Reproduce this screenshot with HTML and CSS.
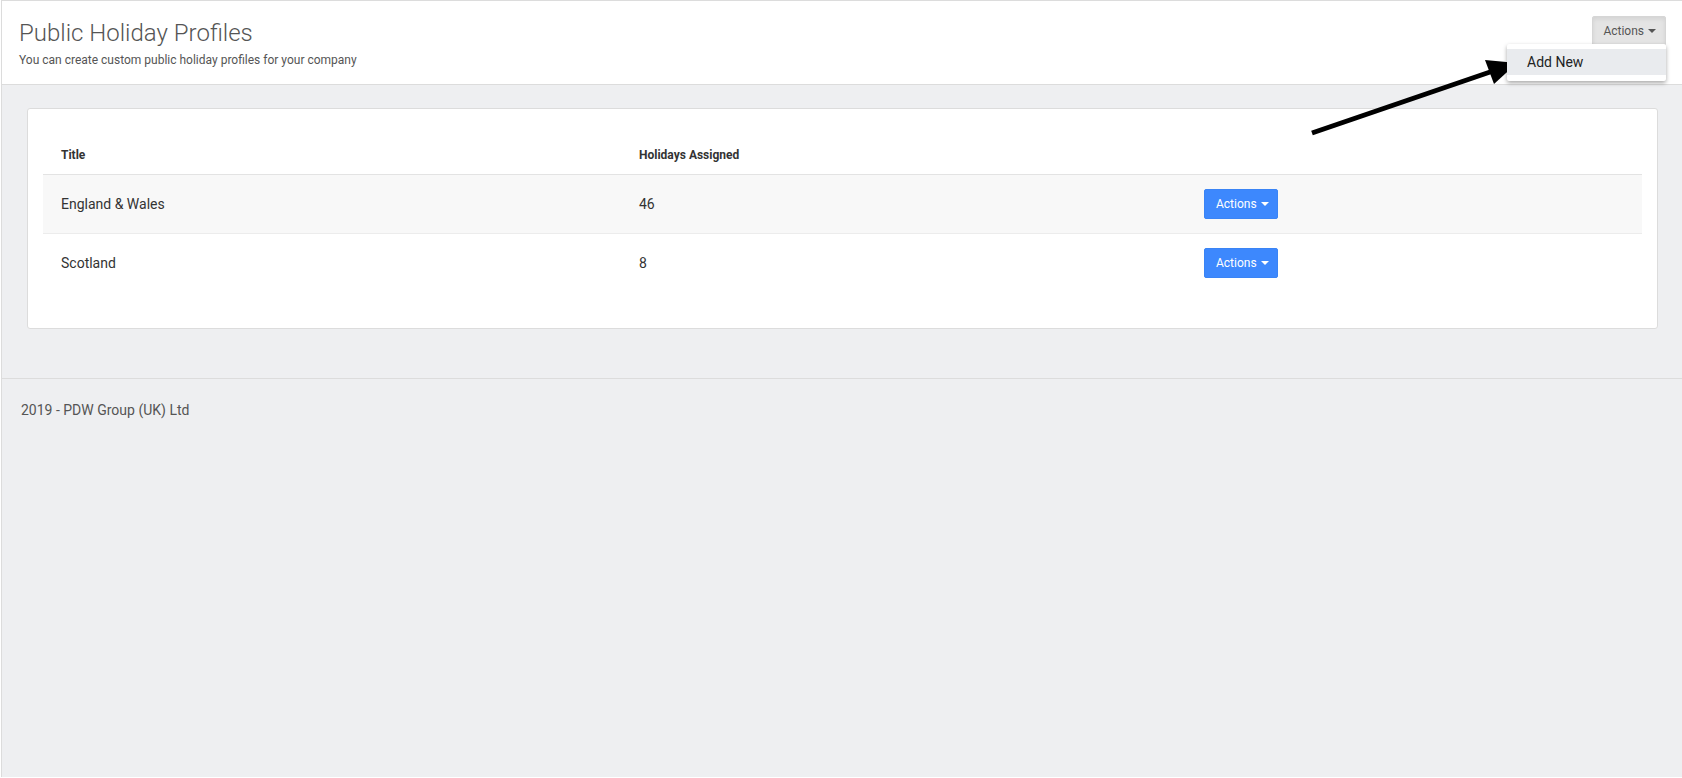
FILE: index.html
```html
<!DOCTYPE html>
<html lang="en">
<head>
  <meta charset="UTF-8">
  <meta name="viewport" content="width=device-width, initial-scale=1.0">
  <title>Public Holiday Profiles</title>
  <link rel="stylesheet" href="styles.css">
</head>
<body>

  <div class="page">
    <div class="page-header">
      <div class="page-heading">
        <h1>Public Holiday Profiles</h1>
        <p class="page-subtitle">You can create custom public holiday profiles for your company</p>
      </div>
      <div class="header-actions">
        <button class="btn btn-default">Actions <span class="caret"></span></button>
        <ul class="dropdown-menu">
          <li class="dropdown-item active">Add New</li>
        </ul>
      </div>
    </div>

    <div class="content">
      <div class="card">
        <table class="profiles-table">
          <thead>
            <tr>
              <th class="col-title">Title</th>
              <th class="col-count">Holidays Assigned</th>
              <th></th>
            </tr>
          </thead>
          <tbody>
            <tr class="striped">
              <td>England &amp; Wales</td>
              <td>46</td>
              <td><button class="btn btn-primary">Actions <span class="caret"></span></button></td>
            </tr>
            <tr>
              <td>Scotland</td>
              <td>8</td>
              <td><button class="btn btn-primary">Actions <span class="caret"></span></button></td>
            </tr>
          </tbody>
        </table>
      </div>
    </div>

    <div class="footer">2019 - PDW Group (UK) Ltd</div>
  </div>

  <!-- annotation arrow pointing at the menu item -->
  <svg class="pointer-arrow" width="1682" height="778" viewBox="0 0 1682 778">
    <line x1="1312" y1="133" x2="1493" y2="71" stroke="#000" stroke-width="5"/>
    <polygon points="1517,63 1485,60 1494,84" fill="#000"/>
  </svg>

</body>
</html>
```

FILE: styles.css
```css
body {
  margin: 0;
  background-color: #ffffff;
  font-family: Roboto, "Helvetica Neue", Arial, sans-serif;
  color: #333;
}
.page {
  margin-left: 1px;
  min-height: 776px;
  border-top: 1px solid #dcdcdc;
  border-left: 1px solid #dcdcdc;
  background-color: #eeeff1;
}
.page-header {
  display: flex;
  justify-content: space-between;
  align-items: flex-start;
  background-color: #fff;
  border-bottom: 1px solid #dcdcdc;
  padding: 15px 16px 15px 17px;
}
.page-header h1 {
  margin: 2px 0 3px 0;
  font-size: 24px;
  line-height: 30px;
  font-weight: 300;
  color: #555;
}
.page-subtitle {
  margin: 0;
  font-size: 12px;
  line-height: 18px;
  color: #555;
}
.header-actions {
  position: relative;
}
.btn {
  font-family: Roboto, Arial, sans-serif;
  border-radius: 2px;
  cursor: pointer;
  display: inline-flex;
  align-items: center;
  gap: 4px;
}
.btn-default {
  height: 30px;
  padding: 0 9px 0 10px;
  font-size: 12px;
  color: #555;
  background-color: #e4e4e4;
  border: 1px solid #d6d6d6;
  box-shadow: inset 0 2px 4px rgba(0, 0, 0, 0.08);
}
.btn-primary {
  height: 30px;
  width: 74px;
  padding: 0 0 0 11px;
  font-size: 12px;
  color: #fff;
  background-color: #3d88fd;
  border: 1px solid #3a84f5;
}
.caret {
  display: inline-block;
  width: 0;
  height: 0;
  border-top: 4px solid currentColor;
  border-left: 4px solid transparent;
  border-right: 4px solid transparent;
}
.dropdown-menu {
  position: absolute;
  top: 28px;
  right: 0;
  width: 159px;
  margin: 0;
  padding: 5px 0 6px;
  list-style: none;
  background-color: #fff;
  border-radius: 2px;
  box-shadow: 0 2px 4px rgba(0, 0, 0, 0.35);
  z-index: 10;
}
.dropdown-item {
  padding: 0 20px;
  height: 26px;
  line-height: 26px;
  font-size: 14px;
  color: #222;
}
.dropdown-item.active {
  background-color: #e9ebee;
}
.content {
  padding: 23px 24px 49px 25px;
}
.card {
  background-color: #fff;
  border: 1px solid #dcdcdc;
  border-radius: 3px;
  padding: 16px 15px 36px 15px;
}
.profiles-table {
  width: 100%;
  border-collapse: collapse;
}
.profiles-table th {
  text-align: left;
  font-size: 12px;
  font-weight: 700;
  color: #333;
  padding: 20px 18px 9px;
  line-height: 20px;
  border-bottom: 1px solid #e3e3e3;
}
.col-title {
  width: 542px;
}
.col-count {
  width: 529px;
}
.profiles-table td {
  font-size: 14px;
  color: #333;
  padding: 14px 18px;
  border-top: 1px solid #ececec;
  vertical-align: middle;
}
.profiles-table tbody tr:first-child td {
  border-top: none;
}
.striped td {
  background-color: #f8f8f8;
}
.footer {
  border-top: 1px solid #dcdcdc;
  padding: 23px 19px;
  font-size: 14px;
  color: #555;
}
.pointer-arrow {
  position: absolute;
  top: 0;
  left: 0;
  pointer-events: none;
}
```
